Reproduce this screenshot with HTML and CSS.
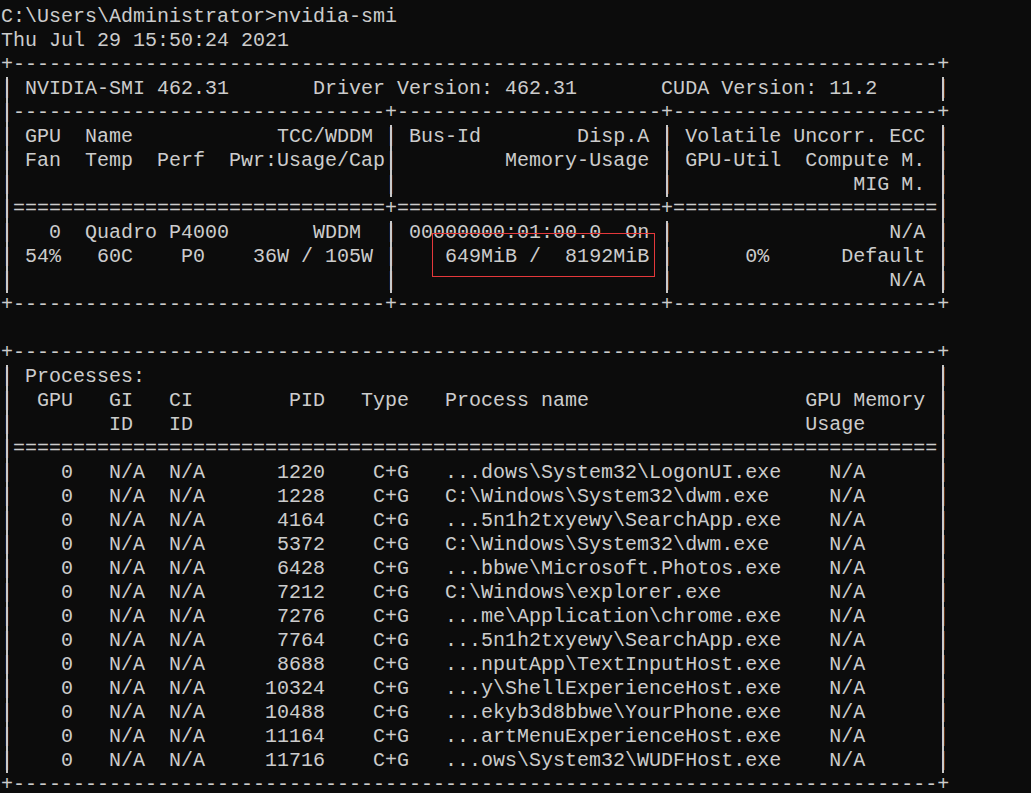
FILE: index.html
```html
<!DOCTYPE html>
<html>
<head>
<meta charset="utf-8">
<title>nvidia-smi</title>
<link rel="stylesheet" href="styles.css">
</head>
<body>
<div class="screen">
<pre class="console">C:\Users\Administrator&gt;nvidia-smi
Thu Jul 29 15:50:24 2021
+-----------------------------------------------------------------------------+
<span class="v">|</span> NVIDIA-SMI 462.31       Driver Version: 462.31       CUDA Version: 11.2     <span class="v">|</span>
<span class="v">|</span>-------------------------------+----------------------+----------------------+
<span class="v">|</span> GPU  Name            TCC/WDDM <span class="v">|</span> Bus-Id        Disp.A <span class="v">|</span> Volatile Uncorr. ECC <span class="v">|</span>
<span class="v">|</span> Fan  Temp  Perf  Pwr:Usage/Cap<span class="v">|</span>         Memory-Usage <span class="v">|</span> GPU-Util  Compute M. <span class="v">|</span>
<span class="v">|</span>                               <span class="v">|</span>                      <span class="v">|</span>               MIG M. <span class="v">|</span>
<span class="v">|</span>===============================+======================+======================<span class="v">|</span>
<span class="v">|</span>   0  Quadro P4000       WDDM  <span class="v">|</span> 00000000:01:00.0  On <span class="v">|</span>                  N/A <span class="v">|</span>
<span class="v">|</span> 54%   60C    P0    36W / 105W <span class="v">|</span>    649MiB /  8192MiB <span class="v">|</span>      0%      Default <span class="v">|</span>
<span class="v">|</span>                               <span class="v">|</span>                      <span class="v">|</span>                  N/A <span class="v">|</span>
+-------------------------------+----------------------+----------------------+

+-----------------------------------------------------------------------------+
<span class="v">|</span> Processes:                                                                  <span class="v">|</span>
<span class="v">|</span>  GPU   GI   CI        PID   Type   Process name                  GPU Memory <span class="v">|</span>
<span class="v">|</span>        ID   ID                                                   Usage      <span class="v">|</span>
<span class="v">|</span>=============================================================================<span class="v">|</span>
<span class="v">|</span>    0   N/A  N/A      1220    C+G   ...dows\System32\LogonUI.exe    N/A      <span class="v">|</span>
<span class="v">|</span>    0   N/A  N/A      1228    C+G   C:\Windows\System32\dwm.exe     N/A      <span class="v">|</span>
<span class="v">|</span>    0   N/A  N/A      4164    C+G   ...5n1h2txyewy\SearchApp.exe    N/A      <span class="v">|</span>
<span class="v">|</span>    0   N/A  N/A      5372    C+G   C:\Windows\System32\dwm.exe     N/A      <span class="v">|</span>
<span class="v">|</span>    0   N/A  N/A      6428    C+G   ...bbwe\Microsoft.Photos.exe    N/A      <span class="v">|</span>
<span class="v">|</span>    0   N/A  N/A      7212    C+G   C:\Windows\explorer.exe         N/A      <span class="v">|</span>
<span class="v">|</span>    0   N/A  N/A      7276    C+G   ...me\Application\chrome.exe    N/A      <span class="v">|</span>
<span class="v">|</span>    0   N/A  N/A      7764    C+G   ...5n1h2txyewy\SearchApp.exe    N/A      <span class="v">|</span>
<span class="v">|</span>    0   N/A  N/A      8688    C+G   ...nputApp\TextInputHost.exe    N/A      <span class="v">|</span>
<span class="v">|</span>    0   N/A  N/A     10324    C+G   ...y\ShellExperienceHost.exe    N/A      <span class="v">|</span>
<span class="v">|</span>    0   N/A  N/A     10488    C+G   ...ekyb3d8bbwe\YourPhone.exe    N/A      <span class="v">|</span>
<span class="v">|</span>    0   N/A  N/A     11164    C+G   ...artMenuExperienceHost.exe    N/A      <span class="v">|</span>
<span class="v">|</span>    0   N/A  N/A     11716    C+G   ...ows\System32\WUDFHost.exe    N/A      <span class="v">|</span>
+-----------------------------------------------------------------------------+
</pre>
<div class="highlight"></div>
</div>
</body>
</html>
```

FILE: styles.css
```css
html, body {
  margin: 0;
  padding: 0;
  background: #0c0c0c;
}

body {
  width: 1031px;
  height: 793px;
  overflow: hidden;
}

.screen {
  position: relative;
  width: 1031px;
  height: 793px;
}

.console {
  margin: 0;
  padding: 5px 0 0 1px;
  font-family: "Liberation Mono", "DejaVu Sans Mono", monospace;
  font-size: 20px;
  line-height: 24px;
  color: #cccccc;
  white-space: pre;
}

/* vertical bar: the glyph plus a full-height rule so rows join up like the console font */
.v {
  display: inline-block;
  background: linear-gradient(to right,
    transparent 5px, #c8c8c8 5px, #c8c8c8 7px, transparent 7px);
}

.highlight {
  position: absolute;
  left: 432px;
  top: 233px;
  width: 223px;
  height: 44px;
  box-sizing: border-box;
  border: 1px solid #e5383b;
}
```
